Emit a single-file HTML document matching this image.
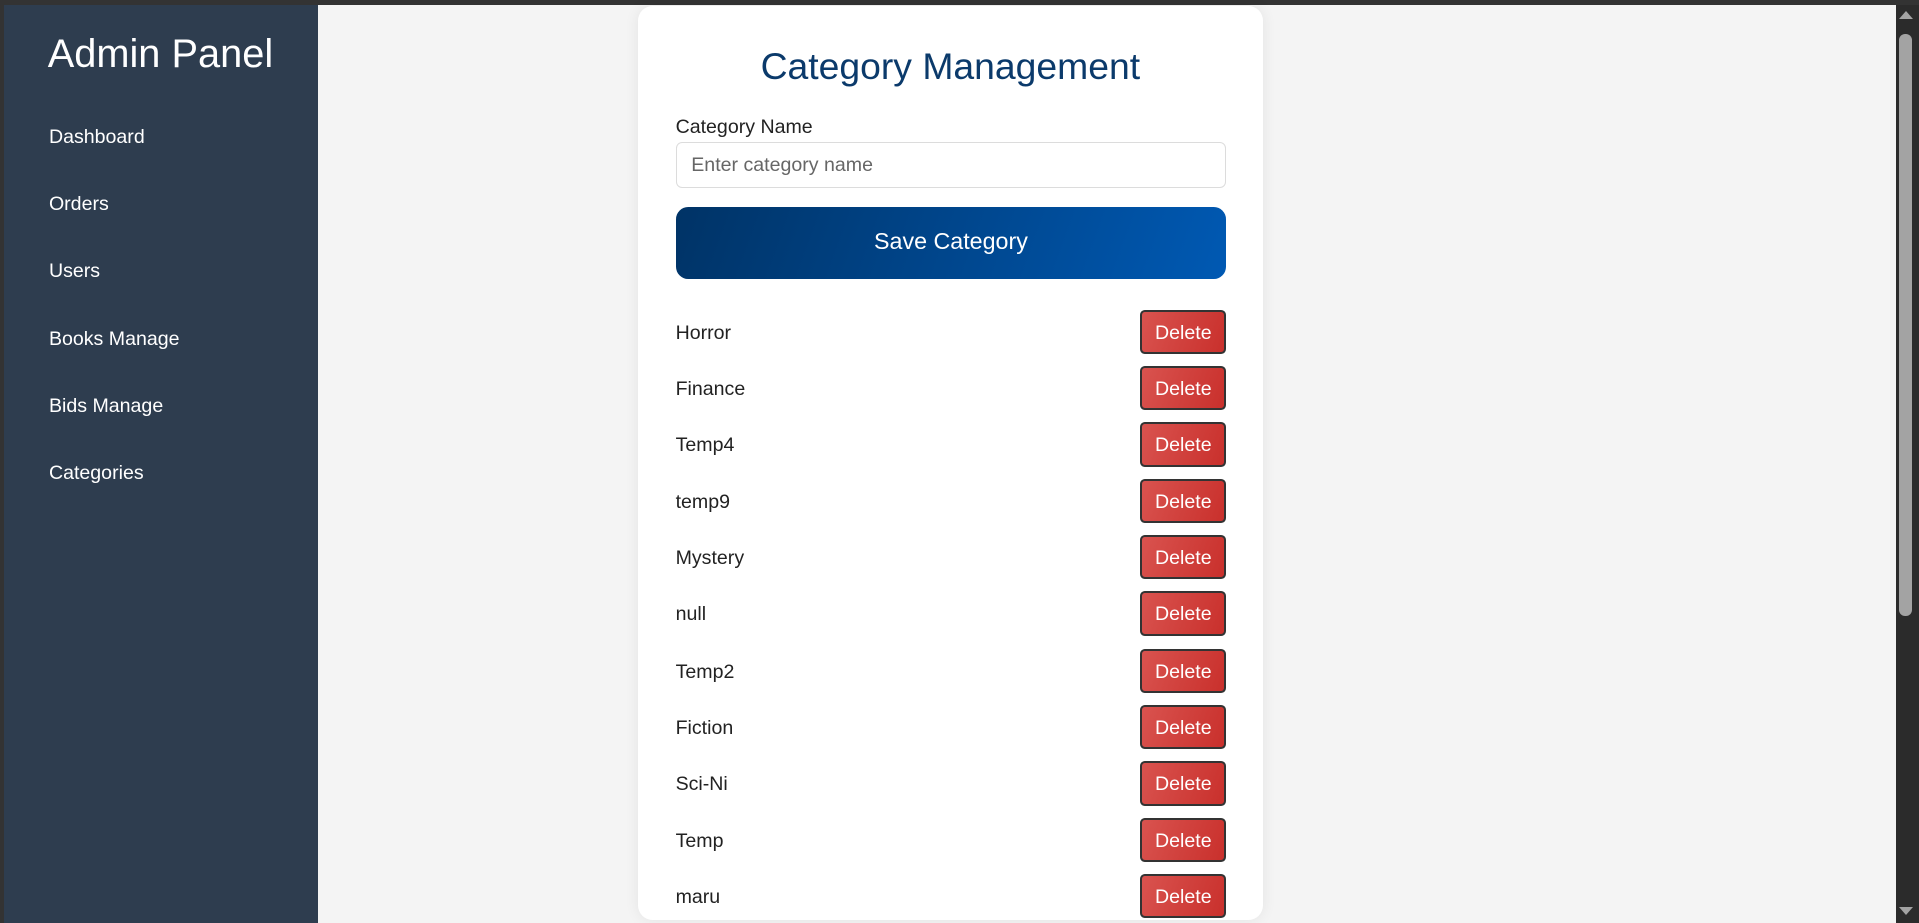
<!DOCTYPE html>
<html><head><meta charset="utf-8"><style>
html,body{margin:0;padding:0;}
body{width:1568px;height:754px;zoom:1.2239;overflow:hidden;position:relative;background:#333;font-family:"Liberation Sans",Arial,sans-serif;}
.main{position:absolute;left:3px;top:4px;width:1546px;height:750px;background:#f4f4f4;}
.side{position:absolute;left:3px;top:4px;width:257px;height:750px;background:#2e3d4f;color:#fff;}
.side h1{position:absolute;left:36px;top:22px;margin:0;font-weight:normal;font-size:32.5px;line-height:36px;}
.side a{position:absolute;left:37px;font-size:16px;color:#fff;text-decoration:none;line-height:20px;}
.card{position:absolute;left:521px;top:5px;width:511px;height:747px;background:#fff;border-radius:12px;box-shadow:0 0 12px rgba(0,0,0,0.07);}
.title{position:absolute;left:0;width:100%;top:29px;text-align:center;font-size:30.5px;line-height:40px;color:#0b3a6b;}
.lbl{position:absolute;left:31px;top:89px;font-size:16px;color:#222;line-height:20px;}
.inp{position:absolute;left:31px;top:111px;height:36px;border:1px solid #dcdcdc;border-radius:5px;font-size:16px;color:#666;line-height:36px;padding-left:12px;box-sizing:content-box;width:436px;}
.btn{position:absolute;left:31px;top:164px;width:450px;height:59px;border-radius:10px;background:linear-gradient(110deg,#003366,#0059b3);color:#fff;font-size:19px;text-align:center;line-height:57px;}
.row{position:absolute;left:31px;width:450px;height:37px;}
.row span{position:absolute;left:0;top:9px;font-size:16px;color:#222;line-height:20px;}
.row b{position:absolute;right:0;top:0;width:67px;height:33px;border:2px solid #333;border-radius:4px;background:linear-gradient(110deg,#d9534f,#c9302c);color:#fff;font-weight:normal;font-size:16px;text-align:center;line-height:35px;}
.sb{position:absolute;left:1549px;top:4px;width:19px;height:750px;background:#2b2b2b;}
.thumb{position:absolute;left:3px;top:24px;width:10px;height:475px;background:#a3a3a3;border-radius:5px;}
.up{position:absolute;left:3px;top:5px;width:0;height:0;border-left:6px solid transparent;border-right:6px solid transparent;border-bottom:7px solid #a3a3a3;}
.dn{position:absolute;left:3px;top:737px;width:0;height:0;border-left:6px solid transparent;border-right:6px solid transparent;border-top:7px solid #a3a3a3;}
</style></head><body>
<div class="main"></div>
<div class="side">
<h1>Admin Panel</h1>
<a style="top:98px">Dashboard</a>
<a style="top:153px">Orders</a>
<a style="top:208px">Users</a>
<a style="top:263px">Books Manage</a>
<a style="top:318px">Bids Manage</a>
<a style="top:373px">Categories</a>
</div>
<div class="card">
<div class="title">Category Management</div>
<div class="lbl">Category Name</div>
<div class="inp">Enter category name</div>
<div class="btn">Save Category</div>
<div class="row" style="top:248px"><span>Horror</span><b>Delete</b></div>
<div class="row" style="top:294px"><span>Finance</span><b>Delete</b></div>
<div class="row" style="top:340px"><span>Temp4</span><b>Delete</b></div>
<div class="row" style="top:386px"><span>temp9</span><b>Delete</b></div>
<div class="row" style="top:432px"><span>Mystery</span><b>Delete</b></div>
<div class="row" style="top:478px"><span>null</span><b>Delete</b></div>
<div class="row" style="top:525px"><span>Temp2</span><b>Delete</b></div>
<div class="row" style="top:571px"><span>Fiction</span><b>Delete</b></div>
<div class="row" style="top:617px"><span>Sci-Ni</span><b>Delete</b></div>
<div class="row" style="top:663px"><span>Temp</span><b>Delete</b></div>
<div class="row" style="top:709px"><span>maru</span><b>Delete</b></div>
</div>
<div class="sb"><div class="up"></div><div class="thumb"></div><div class="dn"></div></div>
</body></html>
